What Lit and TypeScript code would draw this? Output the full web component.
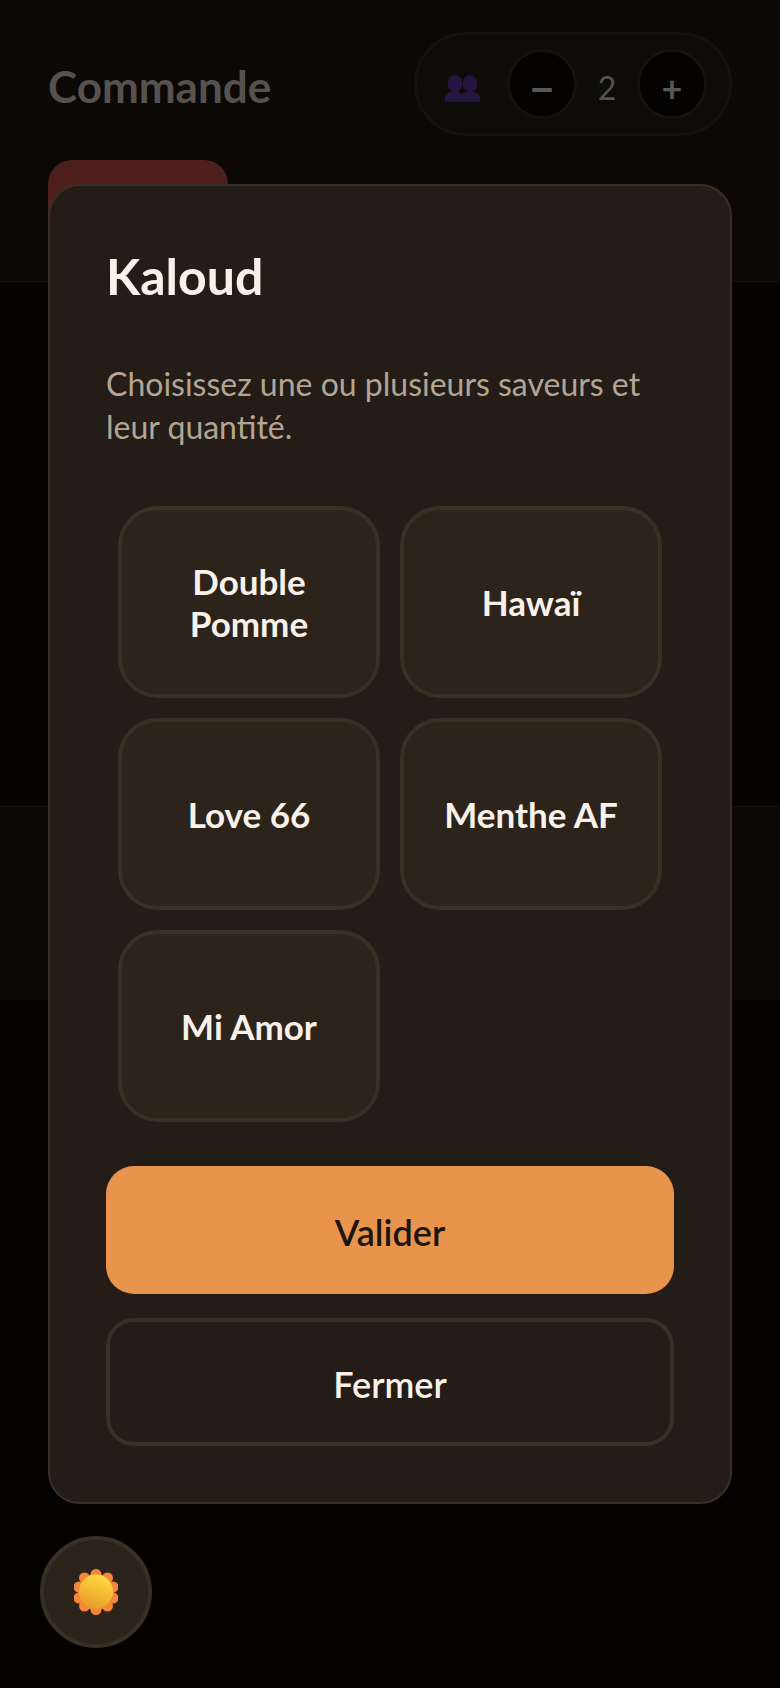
import { LitElement, html, css, svg } from "lit";
import { customElement } from "lit/decorators.js";

const FLAVOURS = ["Double Pomme", "Hawaï", "Love 66", "Menthe AF", "Mi Amor"];

const BUMPS: [number, number][] = [
  [22, 5.5], [10.5, 9], [33.5, 9], [5, 18], [39, 18], [5, 29], [39, 29], [10.5, 37], [33.5, 37], [22, 40.5],
];

@customElement("app-root")
export class AppRoot extends LitElement {
  static styles = css`
    :host { display: block; width: 780px; height: 1688px; position: relative; overflow: hidden; background: #040302; font-family: "Lato", "Open Sans", sans-serif; }
    .page { height: 1688px; display: flex; flex-direction: column; }
    .top { height: 282px; box-sizing: border-box; background: #0b0806; border-bottom: 1px solid #14110d; padding: 32px 48px 0; }
    .head { display: flex; justify-content: space-between; align-items: center; height: 104px; }
    h2 { margin: 0; padding-top: 4px; font-size: 44px; font-weight: 700; color: #55524f; }
    .pill { width: 318px; height: 104px; flex: none; box-sizing: border-box; border: 3px solid #14120f; border-radius: 52px; background: #0e0c09; display: flex; align-items: center; padding-left: 28px; }
    .people { width: 35px; height: 27px; margin-top: 8px; flex: none; }
    .round { width: 70px; height: 70px; flex: none; box-sizing: border-box; border-radius: 50%; border: 3px solid #14120f; background: #040302; color: #5a5754; font-size: 36px; font-weight: 700; display: flex; align-items: center; justify-content: center; padding-top: 8px; }
    .minus { margin-left: 27px; font-size: 44px; }
    .count { width: 60px; flex: none; text-align: center; color: #55524f; font-size: 32px; padding-top: 6px; font-weight: 400; }
    .tab { width: 180px; height: 80px; margin-top: 24px; background: #4f201b; border-radius: 24px 24px 0 0; }
    .gap1 { height: 524px; flex: none; }
    .band { height: 194px; flex: none; box-sizing: border-box; background: #0a0705; border-top: 1px solid #14110d; }

    .modal { position: absolute; left: 48px; top: 184px; width: 684px; box-sizing: border-box; background: #231c17; border: 2px solid #3a2f24; border-radius: 32px; padding: 58px 56px 56px; }
    h1 { margin: 0; font-size: 50px; line-height: 64px; font-weight: 700; color: #f8f1e9; }
    p { margin: 54px 0 0; font-size: 32px; line-height: 43px; color: #b3a594; }
    .grid { display: grid; grid-template-columns: 262px 262px; grid-auto-rows: 192px; gap: 20px 20px; margin: 58px 0 0 12px; }
    .item { box-sizing: border-box; border: 4px solid #3a2f24; border-radius: 40px; background: #2c231b; color: #f8f1e9; font-size: 35px; line-height: 42px; font-weight: 700; text-align: center; display: flex; align-items: center; justify-content: center; padding: 0 40px; }
    .btn { width: 568px; height: 128px; box-sizing: border-box; border-radius: 28px; display: flex; align-items: center; justify-content: center; font-size: 36px; font-weight: 600; padding-top: 4px; }
    .ok { margin-top: 44px; background: #e9944d; color: #1c1611; }
    .close { margin-top: 24px; border: 4px solid #3a2f24; color: #f8f1e9; }
    .sun { position: absolute; left: 40px; top: 1536px; width: 112px; height: 112px; box-sizing: border-box; border-radius: 50%; background: #2c231b; border: 4px solid #3a2f24; display: flex; align-items: center; justify-content: center; }
    .sun svg { width: 44px; height: 46px; }
  `;

  render() {
    return html`
      <div class="page">
        <div class="top">
          <div class="head">
            <h2>Commande</h2>
            <div class="pill">
              <svg class="people" viewBox="0 0 35 27">
                <g fill="#231440">
                  <ellipse cx="10" cy="8.5" rx="7.5" ry="8.5"/><path d="M0 27v-5c0-3 5-5 9-6h4l5 4v7z"/>
                  <ellipse cx="25" cy="8.5" rx="7.5" ry="8.5"/><path d="M14 27v-5c0-3 7-5 11-6 5 1 10 3 10 6v5z"/>
                </g>
              </svg>
              <div class="round minus">−</div>
              <div class="count">2</div>
              <div class="round">+</div>
            </div>
          </div>
          <div class="tab"></div>
        </div>
        <div class="gap1"></div>
        <div class="band"></div>
      </div>
      <div class="modal">
        <h1>Kaloud</h1>
        <p>Choisissez une ou plusieurs saveurs et leur quantité.</p>
        <div class="grid">${FLAVOURS.map((f) => html`<div class="item">${f}</div>`)}</div>
        <div class="btn ok">Valider</div>
        <div class="btn close">Fermer</div>
      </div>
      <div class="sun">
        <svg viewBox="0 0 44 46">
          <defs><linearGradient id="g" x1="0.7" y1="0" x2="0.3" y2="1"><stop offset="0" stop-color="#ffdc40"/><stop offset="1" stop-color="#e89a28"/></linearGradient></defs>
          <circle cx="22" cy="23" r="18" fill="#f5873a"/>
          ${BUMPS.map(([x, y]) => svg`<circle cx=${x} cy=${y} r="5.5" fill="#f5873a"></circle>`)}
          <circle cx="22" cy="22.5" r="17" fill="url(#g)"/>
        </svg>
      </div>
    `;
  }
}
